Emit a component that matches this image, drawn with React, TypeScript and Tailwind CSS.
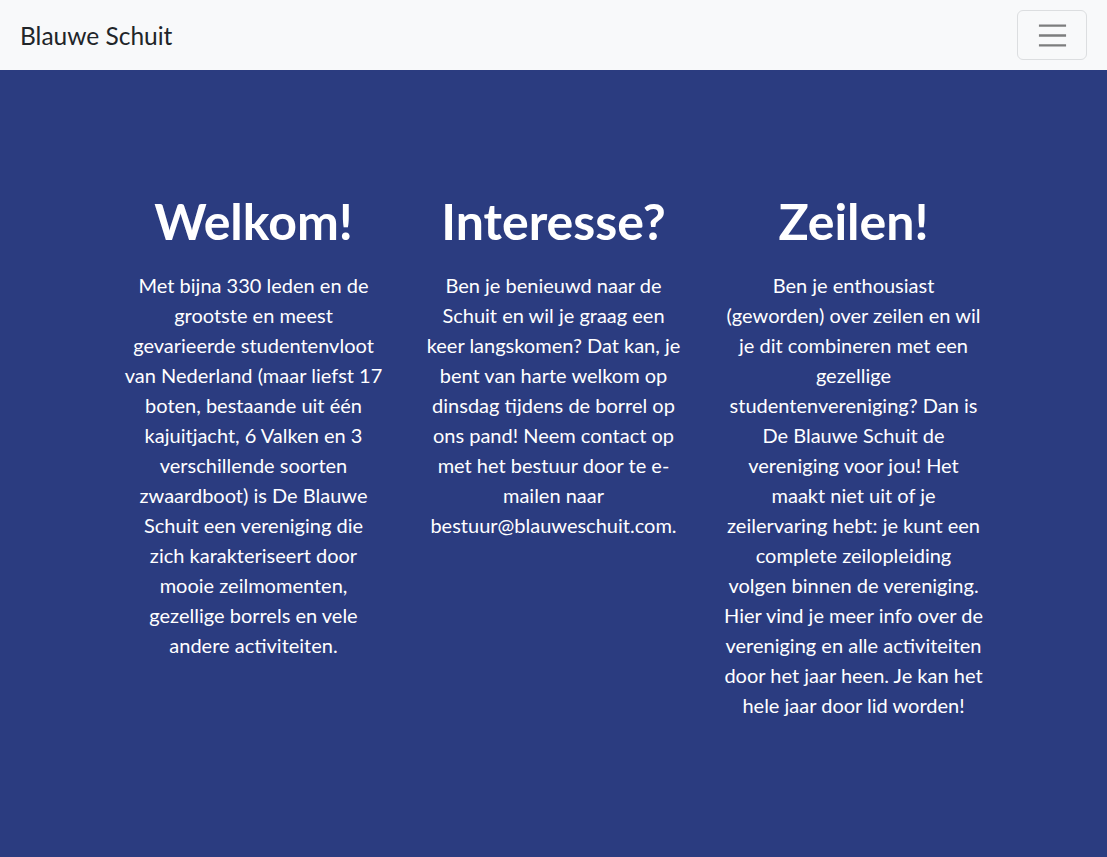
const columns = [
  {
    title: "Welkom!",
    lines: [
      "Met bijna 330 leden en de",
      "grootste en meest",
      "gevarieerde studentenvloot",
      "van Nederland (maar liefst 17",
      "boten, bestaande uit één",
      "kajuitjacht, 6 Valken en 3",
      "verschillende soorten",
      "zwaardboot) is De Blauwe",
      "Schuit een vereniging die",
      "zich karakteriseert door",
      "mooie zeilmomenten,",
      "gezellige borrels en vele",
      "andere activiteiten.",
    ],
  },
  {
    title: "Interesse?",
    lines: [
      "Ben je benieuwd naar de",
      "Schuit en wil je graag een",
      "keer langskomen? Dat kan, je",
      "bent van harte welkom op",
      "dinsdag tijdens de borrel op",
      "ons pand! Neem contact op",
      "met het bestuur door te e-",
      "mailen naar",
      "bestuur@blauweschuit.com.",
    ],
  },
  {
    title: "Zeilen!",
    lines: [
      "Ben je enthousiast",
      "(geworden) over zeilen en wil",
      "je dit combineren met een",
      "gezellige",
      "studentenvereniging? Dan is",
      "De Blauwe Schuit de",
      "vereniging voor jou! Het",
      "maakt niet uit of je",
      "zeilervaring hebt: je kunt een",
      "complete zeilopleiding",
      "volgen binnen de vereniging.",
      "Hier vind je meer info over de",
      "vereniging en alle activiteiten",
      "door het jaar heen. Je kan het",
      "hele jaar door lid worden!",
    ],
  },
]

export default function App() {
  return (
    <div className="min-h-[857px] flex flex-col bg-[#2b3c80] font-['Lato',sans-serif]">
      <nav className="h-[70px] bg-[#f8f9fa] flex items-center justify-between px-5">
        <span className="text-[24.5px] text-[#212529] leading-none pt-[3px]">Blauwe Schuit</span>
        <button className="w-[70px] h-[50px] border border-[#dcdee0] rounded-[6px] flex items-center justify-center">
          <svg width="37" height="37" viewBox="0 0 30 30">
            <path d="M4 7h22M4 15h22M4 23h22" stroke="#7c7d7e" strokeWidth="2" strokeLinecap="butt" />
          </svg>
        </button>
      </nav>
      <main className="flex-1 pt-[121px]">
        <div className="w-[900px] mx-auto grid grid-cols-3">
          {columns.map((col) => (
            <div key={col.title} className="px-5 text-center text-white">
              <h1 className="text-[50px] font-bold leading-[60px] mb-[19px]">{col.title}</h1>
              <p className="text-[20px] leading-[30px]">
                {col.lines.map((line, i) => (
                  <span key={i} className="block whitespace-nowrap">{line}</span>
                ))}
              </p>
            </div>
          ))}
        </div>
      </main>
    </div>
  )
}
